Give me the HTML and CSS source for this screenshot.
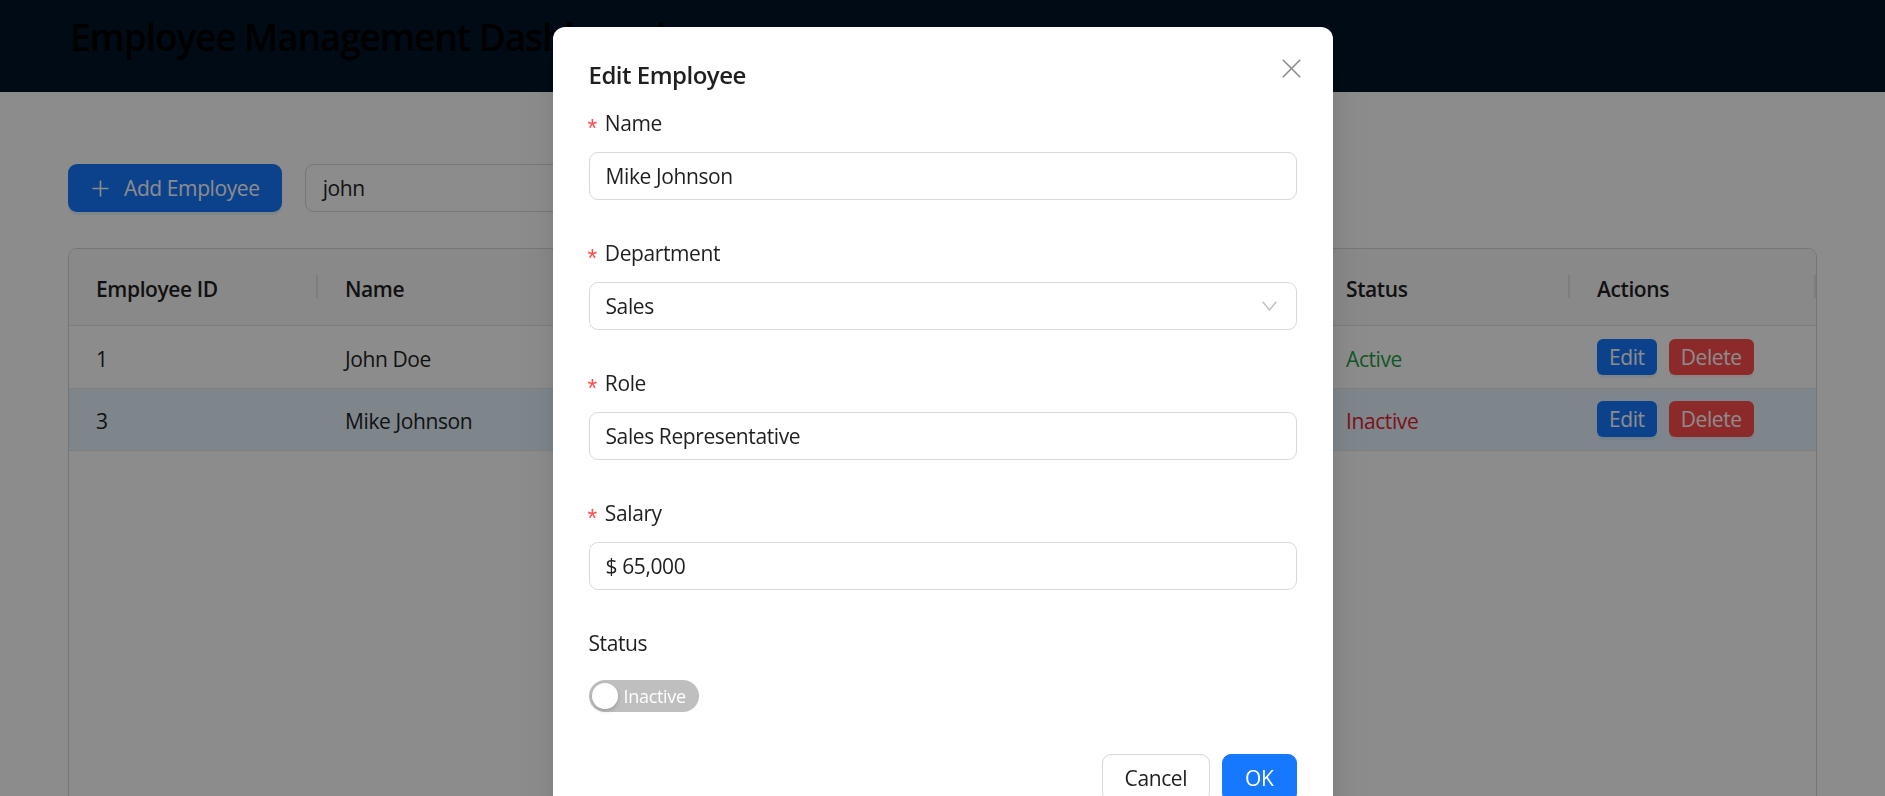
FILE: index.html
```html
<!DOCTYPE html>
<html lang="en">
<head>
<meta charset="utf-8">
<title>Employee Management Dashboard</title>
<link rel="stylesheet" href="styles.css">
</head>
<body>
<header class="app-header">
  <h1 class="app-title">Employee Management Dashboard</h1>
</header>
<main class="content">
  <div class="toolbar">
    <button class="btn-add" type="button">
      <svg class="plus-icon" width="17" height="17" viewBox="0 0 17 17"><path d="M8.5 0.5V16.5M0.5 8.5H16.5" stroke="#fff" stroke-width="1.6" fill="none"/></svg>
      <span>Add Employee</span>
    </button>
    <div class="search">john</div>
  </div>
  <div class="table-card">
    <div class="row head">
      <div class="cell">Employee ID</div>
      <div class="cell">Name</div>
      <div class="cell">Department</div>
      <div class="cell">Role</div>
      <div class="cell">Salary</div>
      <div class="cell">Status</div>
      <div class="cell last">Actions</div>
    </div>
    <div class="row body-row">
      <div class="cell">1</div>
      <div class="cell">John Doe</div>
      <div class="cell">Engineering</div>
      <div class="cell">Software Engineer</div>
      <div class="cell">$75,000</div>
      <div class="cell status-active">Active</div>
      <div class="cell actions"><button class="btn-sm btn-edit" type="button">Edit</button><button class="btn-sm btn-delete" type="button">Delete</button></div>
    </div>
    <div class="row body-row selected">
      <div class="cell">3</div>
      <div class="cell">Mike Johnson</div>
      <div class="cell">Sales</div>
      <div class="cell">Sales Representative</div>
      <div class="cell">$65,000</div>
      <div class="cell status-inactive">Inactive</div>
      <div class="cell actions"><button class="btn-sm btn-edit" type="button">Edit</button><button class="btn-sm btn-delete" type="button">Delete</button></div>
    </div>
  </div>
</main>

<div class="mask"></div>

<div class="modal-wrap">
  <div class="modal">
    <button class="modal-close" type="button" aria-label="Close">
      <svg width="19" height="19" viewBox="0 0 19 19"><path d="M0.8 0.8L18.2 18.2M18.2 0.8L0.8 18.2" stroke="#8c8c8c" stroke-width="1.6" fill="none"/></svg>
    </button>
    <div class="modal-title">Edit Employee</div>
    <form class="form">
      <div class="form-item">
        <div class="label"><span class="req">*</span>Name</div>
        <div class="input">Mike Johnson</div>
      </div>
      <div class="form-item">
        <div class="label"><span class="req">*</span>Department</div>
        <div class="input select">
          <span>Sales</span>
          <svg class="caret" width="15" height="10" viewBox="0 0 15 10"><path d="M0.7 0.8L7.5 9L14.3 0.8" stroke="#bfbfbf" stroke-width="1.4" fill="none"/></svg>
        </div>
      </div>
      <div class="form-item">
        <div class="label"><span class="req">*</span>Role</div>
        <div class="input">Sales Representative</div>
      </div>
      <div class="form-item">
        <div class="label"><span class="req">*</span>Salary</div>
        <div class="input">$ 65,000</div>
      </div>
      <div class="form-item">
        <div class="label">Status</div>
        <div class="control">
          <span class="switch"><span class="knob"></span><span class="switch-text">Inactive</span></span>
        </div>
      </div>
    </form>
    <div class="modal-footer">
      <button class="btn btn-default" type="button">Cancel</button>
      <button class="btn btn-primary" type="button">OK</button>
    </div>
  </div>
</div>
</body>
</html>
```

FILE: styles.css
```css
html, body {
  margin: 0;
  height: 796px;
  overflow: hidden;
}

body {
  font-family: "Open Sans", "Liberation Sans", sans-serif;
  font-size: 21px;
  letter-spacing: -0.4px;
  color: #1f1f1f;
  background: #ffffff;
}

button {
  font-family: inherit;
  letter-spacing: inherit;
  cursor: pointer;
}

/* Header */
.app-header {
  height: 92px;
  background: #001529;
  padding: 0 70px;
  box-sizing: border-box;
}

.app-title {
  margin: 0;
  padding-top: 14px;
  font-size: 37px;
  line-height: 46px;
  font-weight: 600;
  color: #000;
  letter-spacing: -1.1px;
}

/* Content */
.content {
  padding: 72px 68px 0;
}

.toolbar {
  display: flex;
  align-items: center;
  gap: 23px;
  margin-bottom: 36px;
}

.btn-add {
  height: 48px;
  display: inline-flex;
  align-items: center;
  gap: 15px;
  padding: 0 22px 0 24px;
  border: none;
  border-radius: 9px;
  background: #1677ff;
  color: #fff;
  font-size: 21px;
  box-shadow: 0 3px 0 rgba(5, 145, 255, 0.1);
}

.search {
  width: 450px;
  height: 48px;
  box-sizing: border-box;
  border: 1px solid #d9d9d9;
  border-radius: 9px;
  padding: 0 17px;
  display: flex;
  align-items: center;
  background: #fff;
}

/* Table */
.table-card {
  border: 1px solid #d6d6d6;
  border-radius: 9px;
  min-height: 620px;
  overflow: hidden;
}

.row {
  display: grid;
  grid-template-columns: 249px 250px 250px 250px 251px 251px 1fr;
  align-items: center;
  box-sizing: border-box;
}

.head {
  height: 77px;
  background: #fafafa;
  border-bottom: 1px solid #e2e2e2;
  font-weight: 600;
}

.cell {
  padding: 4px 27px 0;
  position: relative;
  white-space: nowrap;
}

.head .cell + .cell::before {
  content: "";
  position: absolute;
  left: -2px;
  top: 50%;
  width: 2px;
  height: 23px;
  margin-top: -12px;
  background: #e6e6e6;
}

.head .cell.last::after {
  content: "";
  position: absolute;
  right: 0;
  top: 50%;
  width: 2px;
  height: 23px;
  margin-top: -12px;
  background: #e6e6e6;
}

.body-row {
  height: 62.5px;
  border-bottom: 1px solid #e8e8e8;
}

.body-row.selected {
  background: #e6f4ff;
}

.status-active {
  color: #1f9d48;
}

.status-inactive {
  color: #e4202e;
}

.actions {
  display: flex;
  align-items: center;
  gap: 12px;
  padding-top: 0;
}

.btn-sm {
  height: 36px;
  padding: 0 12px;
  border: none;
  border-radius: 6px;
  font-size: 21px;
  line-height: 36px;
  color: #fff;
}

.btn-edit {
  background: #1677ff;
  box-shadow: 0 3px 0 rgba(5, 145, 255, 0.1);
}

.btn-delete {
  background: #ff4d4f;
  box-shadow: 0 3px 0 rgba(255, 38, 5, 0.06);
}

/* Mask + modal */
.mask {
  position: fixed;
  inset: 0;
  background: rgba(0, 0, 0, 0.45);
}

.modal-wrap {
  position: fixed;
  inset: 0;
  display: flex;
  justify-content: center;
  align-items: flex-start;
  padding-top: 27px;
  overflow: hidden;
}

.modal {
  position: relative;
  width: 780px;
  box-sizing: border-box;
  background: #fff;
  border-radius: 12px;
  padding: 30px 36px 30px;
  box-shadow: 0 9px 42px 12px rgba(0, 0, 0, 0.05), 0 6px 24px 0 rgba(0, 0, 0, 0.08);
}

.modal-close {
  position: absolute;
  top: 25px;
  right: 25px;
  width: 33px;
  height: 33px;
  padding: 0;
  border: none;
  background: transparent;
  display: flex;
  align-items: center;
  justify-content: center;
}

.modal-title {
  font-size: 24px;
  line-height: 36px;
  font-weight: 600;
  margin-bottom: 14px;
  letter-spacing: -0.5px;
}

.form-item {
  margin-bottom: 37px;
}

.form-item:last-child {
  margin-bottom: 0;
}

.label {
  height: 33px;
  line-height: 33px;
  margin-bottom: 12px;
  display: flex;
  align-items: center;
}

.req {
  color: #ff4d4f;
  margin-left: -1px;
  margin-right: 8px;
  font-family: "Liberation Sans", sans-serif;
  font-size: 25px;
  line-height: 1;
  position: relative;
  top: 5px;
}

.input {
  height: 48px;
  box-sizing: border-box;
  border: 1px solid #d9d9d9;
  border-radius: 9px;
  padding: 0 16px;
  display: flex;
  align-items: center;
  background: #fff;
}

.select {
  justify-content: space-between;
  padding-right: 19px;
}

.control {
  height: 48px;
  display: flex;
  align-items: center;
}

.switch {
  position: relative;
  height: 32px;
  box-sizing: border-box;
  border-radius: 16px;
  background: #bfbfbf;
  display: inline-flex;
  align-items: center;
  padding: 0 13px 0 35px;
  color: #fff;
  font-size: 18px;
  letter-spacing: -0.3px;
}

.knob {
  position: absolute;
  left: 3px;
  top: 3px;
  width: 26px;
  height: 26px;
  border-radius: 50%;
  background: #fff;
  box-shadow: 0 2px 4px rgba(0, 35, 11, 0.2);
}

.modal-footer {
  display: flex;
  justify-content: flex-end;
  gap: 12px;
  margin-top: 34px;
}

.btn {
  height: 48px;
  padding: 0 22px;
  border-radius: 9px;
  font-size: 21px;
}

.btn-default {
  background: #fff;
  border: 1px solid #d9d9d9;
  color: #1f1f1f;
}

.btn-primary {
  background: #1677ff;
  border: 1px solid #1677ff;
  color: #fff;
  box-shadow: 0 3px 0 rgba(5, 145, 255, 0.1);
}
```
